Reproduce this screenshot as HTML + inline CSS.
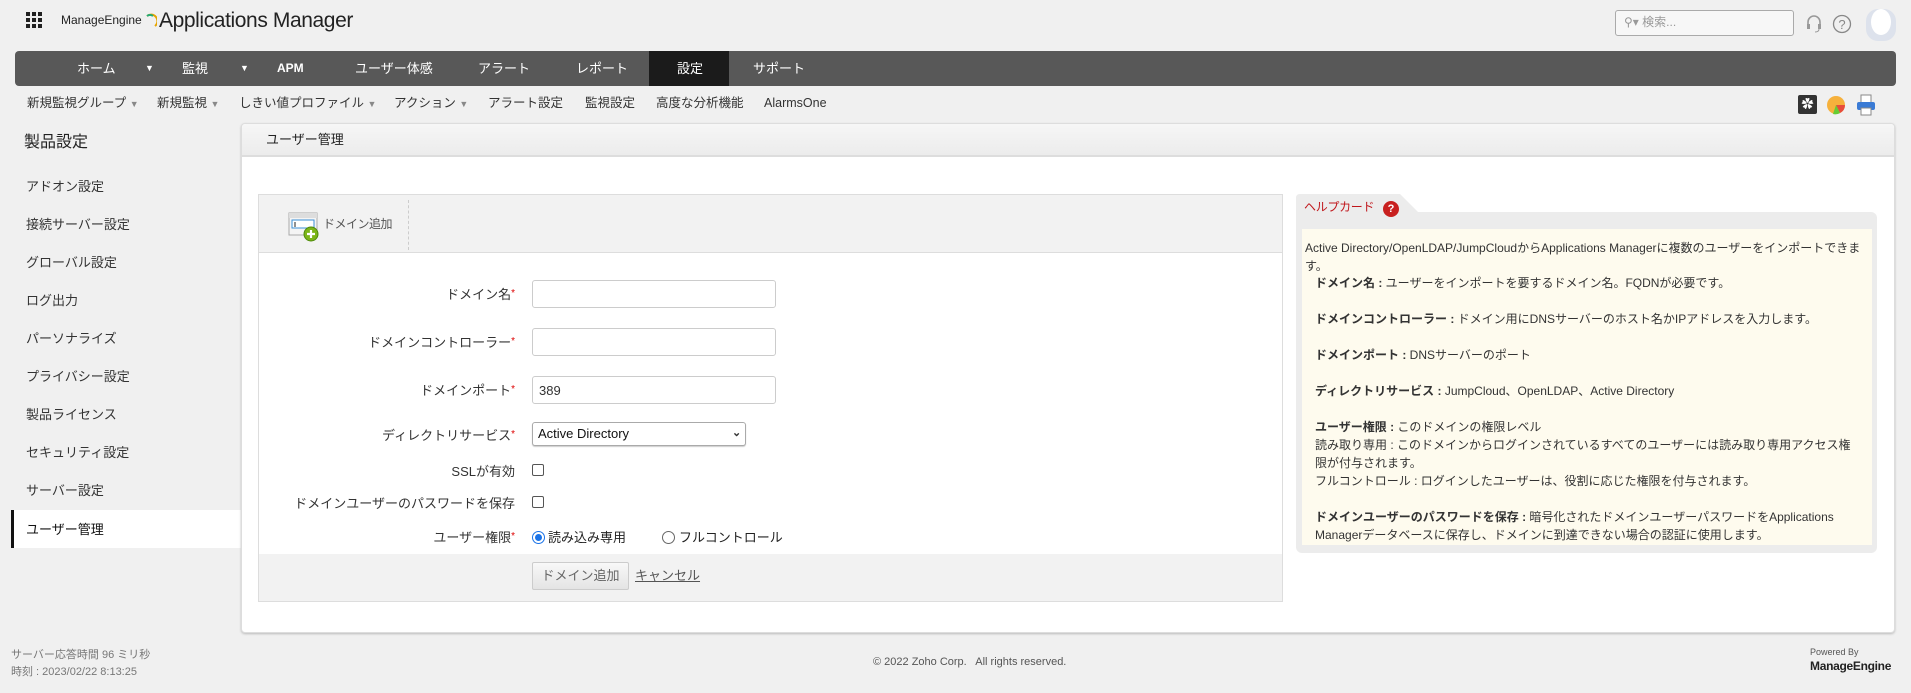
<!DOCTYPE html>
<html><head><meta charset="utf-8">
<style>
*{box-sizing:border-box;margin:0;padding:0}
body{width:1911px;height:693px;background:#f0f0f0;font-family:"Liberation Sans","Noto Sans CJK JP",sans-serif;color:#333;position:relative;overflow:hidden;font-size:13px}
.a{position:absolute;white-space:nowrap;line-height:1.3}
.nav{position:absolute;left:15px;top:51px;width:1881px;height:35px;background:#585858;border-radius:4px}
.nav span{position:absolute;top:0;line-height:35px;color:#fff;font-size:13px}
.sub{top:94px;font-size:12.5px;color:#333;line-height:18px}
.caret{color:#888;font-size:9px}
.side{left:26px;font-size:13px;color:#333;margin-top:3px}
.lbl{right:1396px;font-size:13px;color:#333;margin-top:3px}
.lbl i{color:#d00;font-style:normal;font-size:10px;vertical-align:top}
.inp{position:absolute;left:532px;width:244px;height:28px;border:1px solid #ccc;border-radius:3px;background:#fff}
.help{left:1315px;font-size:12px;color:#333;margin-top:1px}
.help b{font-weight:bold}
</style></head><body>
<!-- logo -->
<svg class="a" style="left:26px;top:12px" width="17" height="17"><g fill="#222"><rect x="0" y="0" width="4" height="4"/><rect x="6" y="0" width="4" height="4"/><rect x="12" y="0" width="4" height="4"/><rect x="0" y="6" width="4" height="4"/><rect x="6" y="6" width="4" height="4"/><rect x="12" y="6" width="4" height="4"/><rect x="0" y="12" width="4" height="4"/><rect x="6" y="12" width="4" height="4"/><rect x="12" y="12" width="4" height="4"/></g></svg>
<div class="a" style="left:61px;top:13px;font-size:12px;color:#222">ManageEngine</div>
<svg class="a" style="left:145px;top:13px" width="12" height="16"><path d="M2 3 A6 6 0 0 1 10 13" stroke="#e6a500" stroke-width="2" fill="none"/><path d="M2 3 A5 5 0 0 1 8 3" stroke="#2a7" stroke-width="2" fill="none"/></svg>
<div class="a" style="left:159px;top:7px;font-size:21px;color:#222;letter-spacing:-0.4px">Applications Manager</div>
<!-- top right -->
<div class="a" style="left:1615px;top:10px;width:179px;height:26px;border:1px solid #aaa;border-radius:3px;background:#f7f7f7"></div>
<div class="a" style="left:1624px;top:15px;font-size:12px;color:#999">⚲▾ 検索...</div>
<svg class="a" style="left:1806px;top:14px" width="16" height="20"><path d="M2 11 V8 A6 6 0 0 1 14 8 V11" stroke="#999" stroke-width="1.6" fill="none"/><rect x="1" y="10" width="3" height="5" fill="#999"/><rect x="12" y="10" width="3" height="5" fill="#999"/><path d="M13 15 Q13 18 9 18" stroke="#999" fill="none"/></svg>
<svg class="a" style="left:1832px;top:14px" width="20" height="20"><circle cx="10" cy="10" r="8.5" stroke="#888" stroke-width="1.3" fill="none"/><text x="10" y="15" font-size="13" text-anchor="middle" fill="#888" font-family="Liberation Sans">?</text></svg>
<svg class="a" style="left:1866px;top:9px" width="30" height="32"><rect x="0" y="0" width="30" height="32" rx="12" fill="#dde2ec"/><ellipse cx="15" cy="13" rx="10" ry="13" fill="#fff"/></svg>
<!-- nav -->
<div class="nav">
<span style="left:62px">ホーム</span><span style="left:130px;font-size:9px">▼</span>
<span style="left:167px">監視</span><span style="left:225px;font-size:9px">▼</span>
<span style="left:262px;font-weight:bold;font-size:12px">APM</span>
<span style="left:340px">ユーザー体感</span>
<span style="left:463px">アラート</span>
<span style="left:561px">レポート</span>
<div style="position:absolute;left:634px;top:0;width:80px;height:35px;background:#1b1b1b"></div>
<span style="left:662px">設定</span>
<span style="left:738px">サポート</span>
</div>
<!-- subnav -->
<div class="a sub" style="left:27px">新規監視グループ <span class="caret">▼</span></div>
<div class="a sub" style="left:157px">新規監視 <span class="caret">▼</span></div>
<div class="a sub" style="left:239px">しきい値プロファイル <span class="caret">▼</span></div>
<div class="a sub" style="left:394px">アクション <span class="caret">▼</span></div>
<div class="a sub" style="left:488px">アラート設定</div>
<div class="a sub" style="left:585px">監視設定</div>
<div class="a sub" style="left:656px">高度な分析機能</div>
<div class="a sub" style="left:764px">AlarmsOne</div>
<div class="a" style="left:1798px;top:95px;width:19px;height:19px;background:#333;border-radius:2px;color:#fff;font-size:12px;text-align:center;line-height:19px">✿</div>
<svg class="a" style="left:1826px;top:95px" width="20" height="20"><circle cx="10" cy="10" r="9" fill="#f6b13c"/><path d="M10 10 L19 10 A9 9 0 0 1 14 18 Z" fill="#e74c3c"/><path d="M10 10 L14 18 A9 9 0 0 1 7 19 Z" fill="#6c3"/></svg>
<svg class="a" style="left:1856px;top:94px" width="20" height="22"><rect x="5" y="1" width="10" height="8" fill="#fff" stroke="#888"/><rect x="1" y="8" width="18" height="8" rx="2" fill="#3a7bd5"/><rect x="5" y="14" width="10" height="7" fill="#fff" stroke="#888"/></svg>
<!-- sidebar -->
<div class="a" style="left:24px;top:133px;font-size:16px;color:#222">製品設定</div>
<div class="a side" style="top:176px">アドオン設定</div>
<div class="a side" style="top:214px">接続サーバー設定</div>
<div class="a side" style="top:252px">グローバル設定</div>
<div class="a side" style="top:290px">ログ出力</div>
<div class="a side" style="top:328px">パーソナライズ</div>
<div class="a side" style="top:366px">プライバシー設定</div>
<div class="a side" style="top:404px">製品ライセンス</div>
<div class="a side" style="top:442px">セキュリティ設定</div>
<div class="a side" style="top:480px">サーバー設定</div>
<div class="a" style="left:11px;top:510px;width:231px;height:38px;background:#fff;border-left:3px solid #111"></div>
<div class="a side" style="top:519px;color:#111">ユーザー管理</div>
<!-- main panel -->
<div class="a" style="left:241px;top:123px;width:1654px;height:510px;background:#fff;border:1px solid #ddd;border-radius:4px;box-shadow:0 1px 2px #bbb"></div>
<div class="a" style="left:242px;top:124px;width:1652px;height:33px;background:linear-gradient(#f6f6f6,#ececec);border-bottom:2px solid #ddd;border-radius:4px 4px 0 0"></div>
<div class="a" style="left:266px;top:132px;font-size:13px;color:#222">ユーザー管理</div>
<!-- form box -->
<div class="a" style="left:258px;top:194px;width:1025px;height:408px;border:1px solid #ddd;background:#fff"></div>
<div class="a" style="left:259px;top:195px;width:1023px;height:58px;background:#f2f2f2;border-bottom:1px solid #ddd"></div>
<div class="a" style="left:408px;top:200px;height:50px;border-left:1px dashed #ccc"></div>
<svg class="a" style="left:288px;top:212px" width="32" height="30"><rect x="1" y="1" width="28" height="22" fill="#f4f4f4" stroke="#aaa"/><rect x="1" y="1" width="28" height="5" fill="#ddd"/><rect x="4" y="8" width="22" height="8" fill="#fff" stroke="#3b8fd6"/><path d="M7 10 v5" stroke="#222"/><circle cx="23" cy="22" r="7" fill="#7cb518" stroke="#4e8a0c"/><path d="M23 18 v8 M19 22 h8" stroke="#fff" stroke-width="2.2"/></svg>
<div class="a" style="left:323px;top:217px;font-size:12px;color:#555;letter-spacing:-0.5px">ドメイン追加</div>
<div class="a lbl" style="top:284px">ドメイン名<i>*</i></div>
<div class="inp" style="top:280px"></div>
<div class="a lbl" style="top:332px">ドメインコントローラー<i>*</i></div>
<div class="inp" style="top:328px"></div>
<div class="a lbl" style="top:380px">ドメインポート<i>*</i></div>
<div class="inp" style="top:376px"></div>
<div class="a" style="left:539px;top:383px;font-size:13px">389</div>
<div class="a lbl" style="top:425px">ディレクトリサービス<i>*</i></div>
<div class="a" style="left:532px;top:422px;width:214px;height:24px;border:1px solid #aaa;border-radius:3px;background:#fff;box-shadow:0 1px 1px #ccc"></div>
<div class="a" style="left:538px;top:426px;font-size:13px;color:#111">Active Directory</div>
<div class="a" style="left:732px;top:426px;font-size:11px;font-weight:bold">⌄</div>
<div class="a lbl" style="top:461px">SSLが有効</div>
<div class="a" style="left:532px;top:464px;width:12px;height:12px;border:1px solid #555;border-radius:2px"></div>
<div class="a lbl" style="top:493px">ドメインユーザーのパスワードを保存</div>
<div class="a" style="left:532px;top:496px;width:12px;height:12px;border:1px solid #555;border-radius:2px"></div>
<div class="a lbl" style="top:527px">ユーザー権限<i>*</i></div>
<div class="a" style="left:532px;top:531px;width:13px;height:13px;border:1.5px solid #1a73e8;border-radius:50%"></div>
<div class="a" style="left:535px;top:534px;width:7px;height:7px;background:#1a73e8;border-radius:50%"></div>
<div class="a" style="left:548px;top:530px;font-size:13px;color:#222">読み込み専用</div>
<div class="a" style="left:662px;top:531px;width:13px;height:13px;border:1px solid #666;border-radius:50%"></div>
<div class="a" style="left:679px;top:530px;font-size:13px;color:#222">フルコントロール</div>
<div class="a" style="left:259px;top:554px;width:1023px;height:47px;background:#f2f2f2"></div>
<div class="a" style="left:532px;top:562px;width:97px;height:28px;border:1px solid #ccc;border-radius:2px;background:linear-gradient(#f8f8f8,#e4e4e4);text-align:center;line-height:26px;font-size:13px;color:#666">ドメイン追加</div>
<div class="a" style="left:635px;top:568px;font-size:13px;color:#555;text-decoration:underline">キャンセル</div>
<!-- help card -->
<svg class="a" style="left:1296px;top:194px" width="130" height="22"><path d="M0 22 V4 Q0 0 4 0 H104 L126 22 Z" fill="#ececec"/></svg>
<div class="a" style="left:1296px;top:212px;width:581px;height:341px;background:#ececec;border-radius:0 6px 6px 6px"></div>
<div class="a" style="left:1302px;top:229px;width:570px;height:316px;background:#fefbee"></div>
<div class="a" style="left:1304px;top:200px;font-size:12px;color:#c0161b;letter-spacing:-0.3px">ヘルプカード</div>
<div class="a" style="left:1383px;top:201px;width:16px;height:16px;border-radius:50%;background:#c8201f;color:#fff;font-size:11px;font-weight:bold;text-align:center;line-height:16px">?</div>
<div class="a" style="left:1305px;top:239px;font-size:12px;line-height:18px;width:565px;white-space:normal">Active Directory/OpenLDAP/JumpCloudからApplications Managerに複数のユーザーをインポートできます。</div>
<div class="a help" style="top:275px"><b>ドメイン名 :</b> ユーザーをインポートを要するドメイン名。FQDNが必要です。</div>
<div class="a help" style="top:311px"><b>ドメインコントローラー :</b> ドメイン用にDNSサーバーのホスト名かIPアドレスを入力します。</div>
<div class="a help" style="top:347px"><b>ドメインポート :</b> DNSサーバーのポート</div>
<div class="a help" style="top:383px"><b>ディレクトリサービス :</b> JumpCloud、OpenLDAP、Active Directory</div>
<div class="a help" style="top:419px"><b>ユーザー権限 :</b> このドメインの権限レベル</div>
<div class="a help" style="top:437px">読み取り専用 : このドメインからログインされているすべてのユーザーには読み取り専用アクセス権</div>
<div class="a help" style="top:455px">限が付与されます。</div>
<div class="a help" style="top:473px">フルコントロール : ログインしたユーザーは、役割に応じた権限を付与されます。</div>
<div class="a help" style="top:509px"><b>ドメインユーザーのパスワードを保存 :</b> 暗号化されたドメインユーザーパスワードをApplications</div>
<div class="a help" style="top:527px">Managerデータベースに保存し、ドメインに到達できない場合の認証に使用します。</div>
<!-- footer -->
<div class="a" style="left:11px;top:648px;font-size:11px;color:#777">サーバー応答時間 96 ミリ秒</div>
<div class="a" style="left:11px;top:665px;font-size:11px;color:#777">時刻 : 2023/02/22 8:13:25</div>
<div class="a" style="left:873px;top:655px;font-size:11px;color:#555">© 2022 Zoho Corp.&nbsp;&nbsp; All rights reserved.</div>
<div class="a" style="left:1810px;top:647px;font-size:9px;color:#555">Powered By</div>
<div class="a" style="left:1810px;top:659px;font-size:12px;color:#222;font-weight:bold;letter-spacing:-0.3px">ManageEngine</div>
</body></html>
